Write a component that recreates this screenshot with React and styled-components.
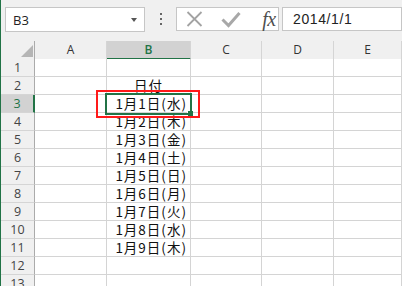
import React from "react";
import styled, { createGlobalStyle } from "styled-components";

const Global = createGlobalStyle`
  html, body { margin: 0; padding: 0; background: #ffffff; }
  body { font-family: "Open Sans", "Liberation Sans", sans-serif; }
`;

const Window = styled.div`
  width: 402px;
  height: 286px;
  overflow: hidden;
  border-left: 1px solid #217346;
  box-sizing: border-box;
  display: flex;
  flex-direction: column;
  background: #ffffff;
`;

const FormulaBar = styled.div`
  height: 41px;
  flex: none;
  background: #f0f0f0;
  display: flex;
  align-items: flex-start;
  padding: 7px 0 0 4px;
  box-sizing: border-box;
`;

const NameBox = styled.div`
  width: 152px;
  height: 25px;
  box-sizing: border-box;
  background: #fff;
  border: 1px solid #c6c6c6;
  display: flex;
  align-items: center;
  justify-content: space-between;
  padding: 0 7px 0 7px;
  font-family: "Open Sans", sans-serif;
  font-size: 13px;
  color: #222;
`;

const Caret = styled.span`
  width: 0;
  height: 0;
  border-left: 3.5px solid transparent;
  border-right: 3.5px solid transparent;
  border-top: 4px solid #555;
  margin-top: 1px;
`;

const Dots = styled.div`
  margin: 6px 0 0 15px;
  display: flex;
  flex-direction: column;
  gap: 3px;
  & > span {
    width: 2px;
    height: 2px;
    background: #666;
  }
`;

const ButtonBox = styled.div`
  margin-left: 14px;
  width: 110px;
  height: 24px;
  box-sizing: border-box;
  background: #fff;
  border: 1px solid #c6c6c6;
  display: flex;
  align-items: center;
  padding-left: 9px;
`;

const IconSlot = styled.span`
  display: flex;
  align-items: center;
  justify-content: center;
  width: ${(p) => p.$w}px;
  margin-left: ${(p) => p.$ml || 0}px;
`;

const Fx = styled.span`
  font-family: "Liberation Serif", "DejaVu Serif", serif;
  font-style: italic;
  font-size: 20px;
  color: #4f4f4f;
  line-height: 20px;
  letter-spacing: -0.5px;
`;

const InputBox = styled.div`
  margin-left: 3px;
  flex: 1;
  min-width: 120px;
  height: 24px;
  box-sizing: border-box;
  background: #fff;
  border: 1px solid #c6c6c6;
  display: flex;
  align-items: center;
  padding-left: 10px;
  font-family: "Liberation Sans", sans-serif;
  font-size: 14px;
  letter-spacing: 0.6px;
  color: #222;
`;

const Sheet = styled.div`
  flex: 1;
  display: flex;
  flex-direction: column;
`;

const Row = styled.div`
  display: grid;
  grid-template-columns: 34px 72px 84px 71px 72px 1fr;
  height: 18px;
  flex: none;
`;

const Corner = styled.div`
  box-sizing: border-box;
  background: #f0f0f0;
  border-right: 1px solid #ababab;
  border-bottom: 1px solid #ababab;
  display: flex;
  align-items: flex-end;
  justify-content: flex-end;
  padding: 0 1px 2px 0;
`;

const ColHead = styled.div`
  box-sizing: border-box;
  background: ${(p) => (p.$sel ? "#d2d2d2" : "#f0f0f0")};
  border-right: 1px solid #d5d5d5;
  border-bottom: ${(p) => (p.$sel ? "2px solid #217346" : "1px solid #ababab")};
  color: ${(p) => (p.$sel ? "#217346" : "#333")};
  font-family: "Open Sans", sans-serif;
  font-size: 12px;
  font-weight: ${(p) => (p.$sel ? 600 : 400)};
  line-height: 17px;
  text-align: center;
`;

const RowHead = styled.div`
  box-sizing: border-box;
  background: ${(p) => (p.$sel ? "#d2d2d2" : "#f0f0f0")};
  border-right: ${(p) => (p.$sel ? "2px solid #217346" : "1px solid #ababab")};
  border-bottom: 1px solid #d5d5d5;
  color: ${(p) => (p.$sel ? "#217346" : "#444")};
  font-family: "Open Sans", sans-serif;
  font-size: 12.5px;
  line-height: 17px;
  text-align: center;
`;

const Cell = styled.div`
  position: ${(p) => (p.$active ? "relative" : "static")};
  box-sizing: border-box;
  background: #fff;
  border-right: 1px solid #d4d4d4;
  border-bottom: 1px solid #d4d4d4;
  font-family: "Noto Sans CJK JP", "Noto Sans CJK SC", sans-serif;
  font-size: 13.5px;
  line-height: 17px;
  color: #111;
  text-align: ${(p) => p.$align || "left"};
  padding-right: ${(p) => (p.$align === "right" ? "3px" : "0")};
  letter-spacing: 1px;
  white-space: nowrap;
`;

const Selection = styled.div`
  position: absolute;
  left: -2px;
  top: -2px;
  width: 87px;
  height: 22px;
  box-sizing: border-box;
  border: 2px solid #217346;
  z-index: 2;
  pointer-events: none;
`;

const FillHandle = styled.div`
  position: absolute;
  left: 81px;
  top: 16px;
  width: 5px;
  height: 5px;
  background: #217346;
  box-shadow: -1px -1px 0 #fff;
`;

const Callout = styled.div`
  position: absolute;
  left: -11px;
  top: -5px;
  width: 104px;
  height: 28px;
  box-sizing: border-box;
  border: 2px solid #ff1a1a;
  z-index: 3;
  pointer-events: none;
`;

const CloseIcon = () => (
  <svg width="17" height="16" viewBox="0 0 17 16">
    <path d="M1.5 1 L15.5 15 M15.5 1 L1.5 15" stroke="#a3a3a3" strokeWidth="1.8" fill="none" />
  </svg>
);

const CheckIcon = () => (
  <svg width="20" height="17" viewBox="0 0 20 17">
    <path d="M1.5 8.5 L7.5 14.5 L18.5 2" stroke="#a8a8a8" strokeWidth="3" fill="none" strokeLinejoin="miter" />
  </svg>
);

const CornerTriangle = () => (
  <svg width="12" height="12" viewBox="0 0 12 12">
    <path d="M12 0 L12 12 L0 12 Z" fill="#b5b5b5" />
  </svg>
);

const cols = ["A", "B", "C", "D", "E"];
const dates = [
  "1月1日(水)",
  "1月2日(木)",
  "1月3日(金)",
  "1月4日(土)",
  "1月5日(日)",
  "1月6日(月)",
  "1月7日(火)",
  "1月8日(水)",
  "1月9日(木)",
];

function cellContent(r) {
  if (r === 2) return { text: "日付", align: "center" };
  if (r >= 3 && r <= 11) return { text: dates[r - 3], align: "right" };
  return { text: "", align: "left" };
}

export default function App() {
  const rows = Array.from({ length: 13 }, (_, i) => i + 1);
  return (
    <>
      <Global />
      <Window>
        <FormulaBar>
          <NameBox>
            <span>B3</span>
            <Caret />
          </NameBox>
          <Dots>
            <span />
            <span />
            <span />
          </Dots>
          <ButtonBox>
            <IconSlot $w={17}>
              <CloseIcon />
            </IconSlot>
            <IconSlot $w={20} $ml={18}>
              <CheckIcon />
            </IconSlot>
            <IconSlot $w={18} $ml={19}>
              <Fx>fx</Fx>
            </IconSlot>
          </ButtonBox>
          <InputBox>2014/1/1</InputBox>
        </FormulaBar>
        <Sheet>
          <Row>
            <Corner>
              <CornerTriangle />
            </Corner>
            {cols.map((c) => (
              <ColHead key={c} $sel={c === "B"}>
                {c}
              </ColHead>
            ))}
          </Row>
          {rows.map((r) => {
            const { text, align } = cellContent(r);
            return (
              <Row key={r}>
                <RowHead $sel={r === 3}>{r}</RowHead>
                <Cell />
                <Cell $align={align} $active={r === 3}>
                  {text}
                  {r === 3 && (
                    <>
                      <Selection />
                      <FillHandle />
                      <Callout />
                    </>
                  )}
                </Cell>
                <Cell />
                <Cell />
                <Cell />
              </Row>
            );
          })}
        </Sheet>
      </Window>
    </>
  );
}
